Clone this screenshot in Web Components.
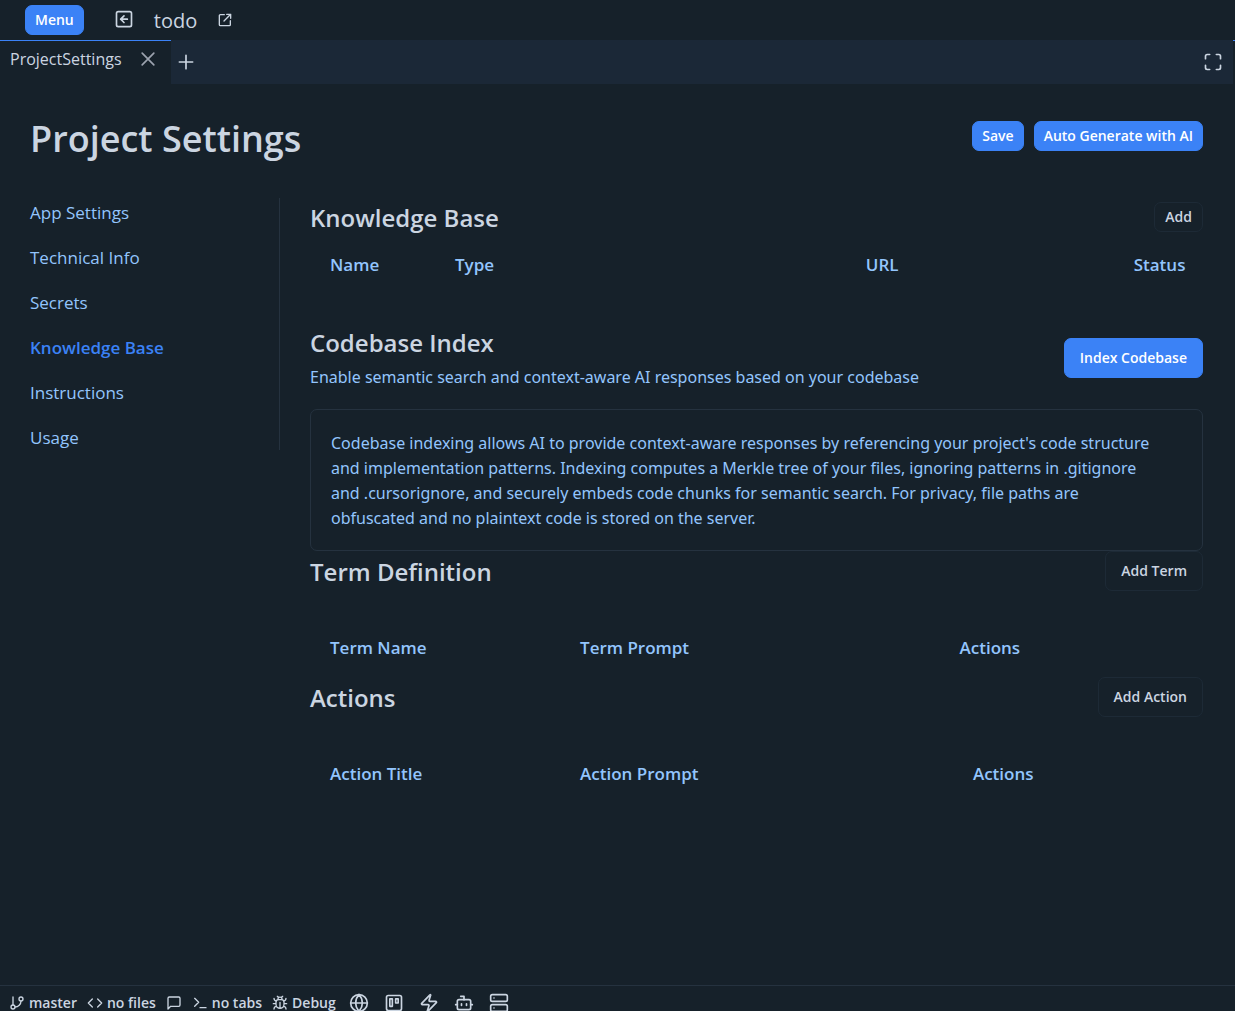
<!DOCTYPE html>
<html lang="en">
<head>
<meta charset="utf-8">
<meta name="viewport" content="width=device-width, initial-scale=1">
<title>Project Settings</title>
<style>
  :root {
    --bg: #16212a; --bar: #1b2837; --line: #25323f; --faint: #1d2a36;
    --text: #cbd5e1; --soft: #93c5fd; --accent: #3b82f6;
  }
  body { margin: 0; background: var(--bg); color: var(--text); font: 16px/25px "Open Sans", "Noto Sans", sans-serif; }
</style>
</head>
<body>
<app-shell></app-shell>
<script>
const ICONS = {
  back: '<rect x="3" y="2" width="18" height="18" rx="2"/><path d="m12 7-4 4 4 4M16 11H8"/>',
  open: '<path d="M11 4H5a1.500 1.500 0 0 0-1.500 1.500V19A1.500 1.500 0 0 0 5 20.500h13.500A1.500 1.500 0 0 0 20 19v-6M14.500 3.500h6v6M20.500 3.500 10.500 13.500"/>',
  close: '<path d="M5 5l14 14M19 5 5 19"/>',
  plus: '<path d="M4 12h16M12 4v16"/>',
  expand: '<path d="M8 3H5a2 2 0 0 0-2 2v3M21 8V5a2 2 0 0 0-2-2h-3M3 16v3a2 2 0 0 0 2 2h3M16 21h3a2 2 0 0 0 2-2v-3"/>',
  branch: '<path d="M6 3v12"/><circle cx="18" cy="6" r="3"/><circle cx="6" cy="18" r="3"/><path d="M18 9a9 9 0 0 1-9 9"/>',
  code: '<path d="m8 6-6 6 6 6M16 6l6 6-6 6"/>',
  chat: '<path d="M21 15a2 2 0 0 1-2 2H7l-4 4V5a2 2 0 0 1 2-2h14a2 2 0 0 1 2 2z"/>',
  terminal: '<path d="m4 17 6-6-6-6M12 19h9"/>',
  bug: '<path d="m8 2 1.880 1.880M14.120 3.880 16 2M9 7.130v-1a3 3 0 1 1 6 0v1M12 20a6 6 0 0 1-6-6v-3a4 4 0 0 1 4-4h4a4 4 0 0 1 4 4v3a6 6 0 0 1-6 6M12 20v-9M6.530 9C4.600 8.800 3 7.100 3 5M6 13H2M3 21c0-2.100 1.700-3.900 3.800-4M20.970 5c0 2.100-1.600 3.800-3.500 4M22 13h-4M17.200 17c2.100.1 3.800 1.900 3.800 4"/>',
  globe: '<circle cx="12" cy="12" r="10"/><path d="M12 2a14.500 14.500 0 0 0 0 20 14.500 14.500 0 0 0 0-20M2 12h20"/>',
  board: '<rect x="3" y="3" width="18" height="18" rx="2"/><rect x="7" y="7" width="3" height="9"/><rect x="14" y="7" width="3" height="5"/>',
  bolt: '<path d="M4 14a1 1 0 0 1-.78-1.630l9.900-10.200a.5.5 0 0 1 .86.46l-1.920 6.020A1 1 0 0 0 13 10h7a1 1 0 0 1 .78 1.630l-9.900 10.200a.5.5 0 0 1-.86-.46l1.920-6.020A1 1 0 0 0 11 14z"/>',
  bot: '<path d="M12 8V4H8"/><rect x="4" y="8" width="16" height="12" rx="2"/><path d="M2 14h2M20 14h2M15 13v2M9 13v2"/>',
  server: '<rect x="2" y="2" width="20" height="8" rx="2"/><rect x="2" y="14" width="20" height="8" rx="2"/><path d="M6 6h.01M6 18h.01"/>'
};
function define(name, html, setup) {
  const template = document.createElement('template');
  template.innerHTML = '<style>*{box-sizing:border-box}</style>' + html;
  customElements.define(name, class extends HTMLElement {
    constructor() {
      super();
      this.attachShadow({ mode: 'open' }).append(template.content.cloneNode(true));
    }
    connectedCallback() { if (setup) setup(this, this.shadowRoot); }
  });
}

define('ui-icon', `
<style>
  :host { display: block; flex: none; width: 20px; height: 20px; }
  :host([small]) { width: 16px; height: 16px; }
  svg { display: block; width: 100%; height: 100%; fill: none; stroke: currentColor; stroke-width: 2; stroke-linecap: round; stroke-linejoin: round; }
</style>
<svg viewBox="0 0 24 24" aria-hidden="true"></svg>`,
(host, root) => { root.querySelector('svg').innerHTML = ICONS[host.getAttribute('name')]; });

define('icon-button', `
<style>
  :host { display: block; flex: none; }
  button { display: flex; align-items: center; gap: 4px; height: 100%; padding: 0; border: 0; background: none; color: inherit; font: inherit; cursor: pointer; }
</style>
<button type="button"><slot></slot></button>`,
(host, root) => { if (host.hasAttribute('label')) root.querySelector('button').setAttribute('aria-label', host.getAttribute('label')); });

define('ui-button', `
<style>
  :host { display: block; flex: none; }
  button { display: block; height: 30px; padding: 0 10px; border: 1px solid var(--faint); border-radius: 7px; background: none; color: var(--text); font: 600 14px/20px "Open Sans", "Noto Sans", sans-serif; white-space: nowrap; cursor: pointer; }
  :host([large]) button { height: 40px; padding: 0 15px; }
  :host([primary]) button { background: var(--accent); border-color: var(--accent); color: #fff; }
  :host([primary]:not([large])) button { padding: 0 9px; }
</style>
<button type="button"><slot></slot></button>`);

define('top-bar', `
<style>
  :host { display: flex; align-items: center; height: 40px; padding: 0 25px; flex: none; }
  .project { display: flex; align-items: center; gap: 20px; margin-left: 30px; font-size: 20px; }
</style>
<ui-button primary>Menu</ui-button>
<div class="project">
  <icon-button label="Back"><ui-icon name="back"></ui-icon></icon-button>
  <span>todo</span>
  <icon-button label="Open in new window"><ui-icon name="open" small></ui-icon></icon-button>
</div>`);

define('tab-bar', `
<style>
  :host { display: flex; height: 44px; flex: none; background: var(--bar); }
  .tab { display: flex; align-items: flex-start; gap: 16px; padding: 6px 13px 0 10px; border-top: 1px solid var(--accent); background: var(--bg); }
  .tools { flex: 1; display: flex; align-items: center; justify-content: space-between; padding: 0 10px 0 5px; }
  .close { color: #9ca3af; padding-top: 2px; }
  .edge { width: 2px; background: var(--bg); border-top: 1px solid var(--accent); }
</style>
<div class="tab"><span>ProjectSettings</span><icon-button class="close" label="Close tab"><ui-icon name="close"></ui-icon></icon-button></div>
<div class="tools">
  <icon-button label="New tab"><ui-icon name="plus"></ui-icon></icon-button>
  <icon-button label="Full screen"><ui-icon name="expand"></ui-icon></icon-button>
</div>
<div class="edge"></div>`);

define('side-nav', `
<style>
  :host { display: block; width: 250px; flex: none; border-right: 1px solid var(--line); }
  nav { display: flex; flex-direction: column; gap: 20px; padding-top: 2px; }
</style>
<nav aria-label="Settings"><slot></slot></nav>`);

define('nav-item', `
<style>
  :host { display: block; }
  a { display: block; color: var(--soft); text-decoration: none; font-size: 17px; }
  :host([current]) a { color: var(--accent); font-weight: 600; }
</style>
<a href="#"><slot></slot></a>`,
(host, root) => { if (host.hasAttribute('current')) root.querySelector('a').setAttribute('aria-current', 'page'); });

define('settings-section', `
<style>
  :host { display: block; }
  header { display: flex; align-items: center; justify-content: space-between; min-height: 38px; }
  h2 { margin: 0; font-size: 24px; line-height: 35px; font-weight: 600; }
  p { margin: 5px 0 0; font: 16px/25px "Noto Sans", sans-serif; color: var(--soft); }
</style>
<header><div><h2></h2></div><slot name="action"></slot></header>
<slot></slot>`,
(host, root) => {
  const heading = root.querySelector('h2');
  heading.textContent = host.getAttribute('heading');
  if (host.hasAttribute('note')) {
    const note = document.createElement('p');
    note.textContent = host.getAttribute('note');
    heading.after(note);
  }
});

define('data-table', `
<style>
  :host { display: block; }
  table { width: 100%; border-collapse: collapse; table-layout: fixed; }
  th { padding: 0 0 0 20px; text-align: left; font-size: 17px; line-height: 25px; font-weight: 600; color: var(--soft); white-space: nowrap; }
</style>
<table><thead><tr></tr></thead><tbody></tbody></table>`,
(host, root) => {
  const row = root.querySelector('tr');
  row.replaceChildren(...host.getAttribute('columns').split(',').map(column => {
    const [label, width] = column.split(':');
    const cell = document.createElement('th');
    cell.scope = 'col';
    cell.textContent = label;
    cell.style.width = width + '%';
    return cell;
  }));
});

define('info-box', `
<style>
  :host { display: block; padding: 21px 40px 19px 20px; border: 1px solid var(--line); border-radius: 7px; color: var(--soft); font: 16px/25px "Noto Sans", sans-serif; }
</style>
<slot></slot>`);

define('settings-page', `
<style>
  :host { display: block; flex: 1; min-height: 0; overflow: hidden; padding: 30px 32px 0 30px; }
  .title { display: flex; align-items: center; justify-content: space-between; height: 44px; margin-bottom: 40px; }
  h1 { margin: 0; padding-top: 6px; font-size: 36px; line-height: 44px; font-weight: 600; }
  .buttons { display: flex; gap: 10px; }
  .columns { display: flex; align-items: flex-start; gap: 30px; }
  side-nav { height: 252px; }
  main { flex: 1; min-width: 0; }
  .knowledge data-table { padding: 16px 0 48px; }
  info-box { margin-top: 19px; }
  .listing data-table { padding: 44px 0 17px; }
</style>
<div class="title">
  <h1>Project Settings</h1>
  <div class="buttons"><ui-button primary>Save</ui-button><ui-button primary>Auto Generate with AI</ui-button></div>
</div>
<div class="columns">
  <side-nav>
    <nav-item>App Settings</nav-item>
    <nav-item>Technical Info</nav-item>
    <nav-item>Secrets</nav-item>
    <nav-item current>Knowledge Base</nav-item>
    <nav-item>Instructions</nav-item>
    <nav-item>Usage</nav-item>
  </side-nav>
  <main>
    <settings-section class="knowledge" heading="Knowledge Base">
      <ui-button slot="action">Add</ui-button>
      <data-table columns="Name:14,Type:46,URL:30,Status:10"></data-table>
    </settings-section>
    <settings-section heading="Codebase Index" note="Enable semantic search and context-aware AI responses based on your codebase">
      <ui-button slot="action" primary large>Index Codebase</ui-button>
      <info-box>Codebase indexing allows AI to provide context-aware responses by referencing your project's code structure and implementation patterns. Indexing computes a Merkle tree of your files, ignoring patterns in .gitignore and .cursorignore, and securely embeds code chunks for semantic search. For privacy, file paths are obfuscated and no plaintext code is stored on the server.</info-box>
    </settings-section>
    <settings-section class="listing" heading="Term Definition">
      <ui-button slot="action" large>Add Term</ui-button>
      <data-table columns="Term Name:28,Term Prompt:42.5,Actions:29.5"></data-table>
    </settings-section>
    <settings-section class="listing" heading="Actions">
      <ui-button slot="action" large>Add Action</ui-button>
      <data-table columns="Action Title:28,Action Prompt:44,Actions:28"></data-table>
    </settings-section>
  </main>
</div>`);

define('status-bar', `
<style>
  :host { display: flex; align-items: flex-start; gap: 10px; flex: none; height: 26px; overflow: hidden; padding: 5px 9px 0; border-top: 1px solid var(--line); font: 600 14px/20px "Open Sans", "Noto Sans", sans-serif; }
  icon-button { height: 24px; }
  .tools { display: flex; gap: 15px; margin-left: 3px; }
</style>
<icon-button><ui-icon name="branch" small></ui-icon>master</icon-button>
<icon-button><ui-icon name="code" small></ui-icon>no files</icon-button>
<icon-button label="Chat"><ui-icon name="chat" small></ui-icon></icon-button>
<icon-button><ui-icon name="terminal" small></ui-icon>no tabs</icon-button>
<icon-button><ui-icon name="bug" small></ui-icon>Debug</icon-button>
<div class="tools">
  <icon-button label="Browser"><ui-icon name="globe"></ui-icon></icon-button>
  <icon-button label="Board"><ui-icon name="board"></ui-icon></icon-button>
  <icon-button label="Actions"><ui-icon name="bolt"></ui-icon></icon-button>
  <icon-button label="Agent"><ui-icon name="bot"></ui-icon></icon-button>
  <icon-button label="Server"><ui-icon name="server"></ui-icon></icon-button>
</div>`);

define('app-shell', `
<style>:host { display: flex; flex-direction: column; height: 100vh; overflow: hidden; }</style>
<top-bar></top-bar>
<tab-bar></tab-bar>
<settings-page></settings-page>
<status-bar></status-bar>`);
</script>
</body>
</html>
